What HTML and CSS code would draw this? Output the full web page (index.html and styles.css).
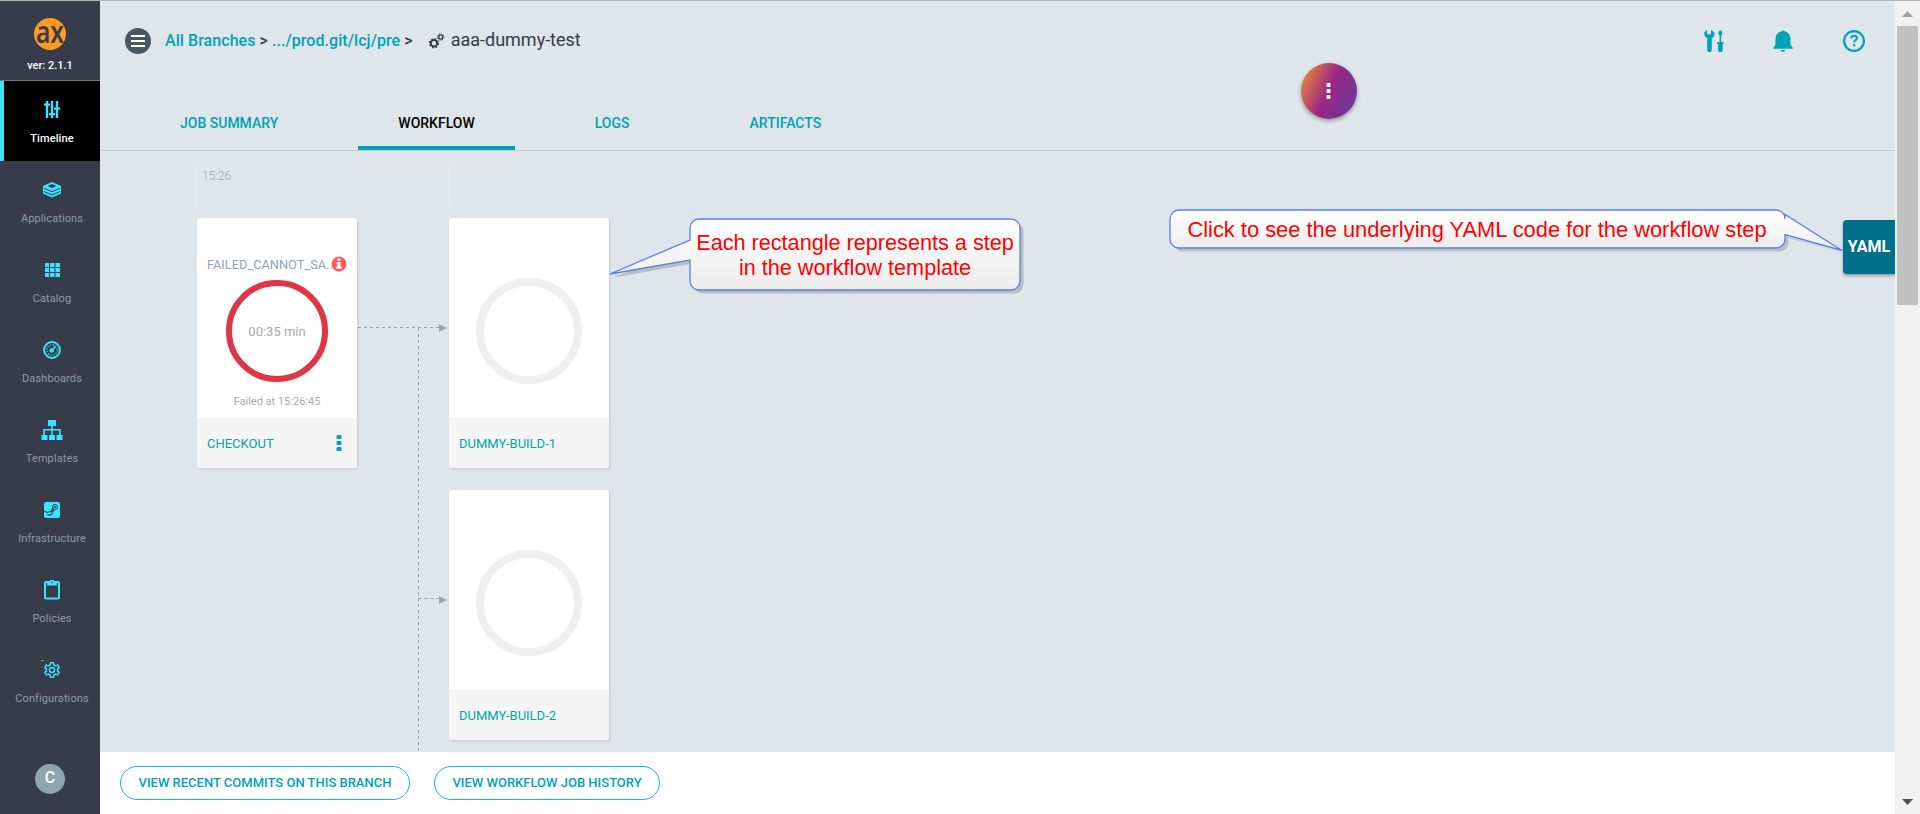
FILE: index.html
```html
<!DOCTYPE html>
<html lang="en">
<head>
<meta charset="utf-8">
<title>aaa-dummy-test</title>
<link rel="stylesheet" href="styles.css">
</head>
<body>
<div class="app">
  <nav class="sidebar">
    <div class="brand">
      <svg class="logo" width="32" height="32" viewBox="0 0 32 32"><circle cx="16" cy="16" r="16" fill="#ff9a1f"/><text class="logo-text" x="2" y="25" textLength="28" lengthAdjust="spacingAndGlyphs">ax</text></svg>
      <span class="version">ver: 2.1.1</span>
    </div>
    <a class="item active">
      <svg width="22" height="20" viewBox="0 0 22 20" fill="currentColor"><path d="M4.800 1h2.400v17H4.800zM9.800 1h2.400v17H9.800zM14.800 1h2.400v17h-2.400z"/><path d="M3 3.500h6v2.300H3zM8 13h6v2.300H8zM13 7.500h6v2.300h-6z"/></svg>
      <span>Timeline</span>
    </a>
    <a class="item">
      <svg width="22" height="20" viewBox="0 0 22 20" fill="currentColor"><path fill-rule="evenodd" d="M11 2l9 4v7.500l-9 4-9-4V6zM11 4L6.500 6 11 8l4.500-2zM3 7.700l8 3.500 8-3.500v1L11 12.200 3 8.700zM3 11l8 3.500L19 11v1l-8 3.500L3 12z"/></svg>
      <span>Applications</span>
    </a>
    <a class="item">
      <svg width="22" height="20" viewBox="0 0 22 20" fill="currentColor"><path d="M4 3h4v4H4zM9 3h4.500v4H9zM14.500 3H19v4h-4.500zM4 8h4v4H4zM9 8h4.500v4H9zM14.500 8H19v4h-4.500zM4 13h4v4H4zM9 13h4.500v4H9zM14.500 13H19v4h-4.500z"/></svg>
      <span>Catalog</span>
    </a>
    <a class="item">
      <svg width="22" height="20" viewBox="0 0 22 20" fill="none" stroke="currentColor"><circle cx="11" cy="10" r="7.900" stroke-width="2"/><circle cx="11" cy="10" r="5.200" stroke-width="1.200" stroke-dasharray="1.300 1.420"/><path d="M11 10.500L14.500 6" stroke-width="1.800"/><circle cx="10.700" cy="10.500" r="2.200" fill="currentColor" stroke="none"/></svg>
      <span>Dashboards</span>
    </a>
    <a class="item">
      <svg width="22" height="20" viewBox="0 0 22 20" fill="currentColor"><path d="M7 0h8v6H7zM10.200 6h1.600v9h-1.600z"/><path d="M2.300 16v-7h17.400v7h-1.600v-5.400H3.900V16z"/><path d="M.500 15h6v5h-6zM8 15h6v5H8zM15.500 15h6v5h-6z"/></svg>
      <span>Templates</span>
    </a>
    <a class="item">
      <svg width="22" height="20" viewBox="0 0 22 20"><rect x="3" y="2" width="16" height="16" rx="2" fill="currentColor"/><g fill="none" stroke="#373c4a"><circle cx="14" cy="7" r="2.500"/><path d="M3 11.200l4 1.300M6.500 14c1.500 2.200 5 1 4.800-2.200L13.500 9.500M7 12l3-.5 2-3.500" stroke-width="1.200"/></g><circle cx="14" cy="7" r="1" fill="#373c4a"/></svg>
      <span>Infrastructure</span>
    </a>
    <a class="item">
      <svg width="22" height="20" viewBox="0 0 22 20"><rect x="4" y="2" width="14" height="16.500" rx="1" fill="none" stroke="currentColor" stroke-width="2"/><path fill="currentColor" d="M6 3l3-2a2 2 0 0 1 4 0l3 2v2.500H6z"/><circle cx="11" cy="2.500" r=".7" fill="#373c4a"/></svg>
      <span>Policies</span>
    </a>
    <a class="item">
      <svg width="22" height="20" viewBox="0 0 22 20" fill="none" stroke="currentColor" stroke-width="1.500"><path d="M.500.500h2" stroke-width="1"/><path stroke-linejoin="round" d="M9.500 2.800h3l.4 2.200 1.600.9 2.200-.8 1.500 2.500-1.700 1.500v1.800l1.700 1.500-1.500 2.500-2.200-.8-1.600.9-.4 2.200h-3L9.100 15l-1.600-.9-2.200.8-1.500-2.500 1.700-1.500V9.100L3.800 7.600l1.500-2.500 2.200.8L9.100 5z"/><circle cx="11" cy="10" r="2.500"/></svg>
      <span>Configurations</span>
    </a>
    <div class="avatar">C</div>
  </nav>

  <main class="main">
    <header class="topbar">
      <svg class="menu" width="26" height="26" viewBox="0 0 26 26"><circle cx="13" cy="13" r="13" fill="#485863"/><path d="M6 8h14M6 13h14M6 18h14" stroke="#fff" stroke-width="2"/></svg>
      <div class="crumbs"><a>All Branches</a> &gt; <a>.../prod.git/lcj/pre</a> &gt;</div>
      <svg class="gears" width="17" height="16" viewBox="0 0 17 16" fill="none" stroke="#373c4a"><circle cx="6" cy="10.200" r="3.200" stroke-width="2"/><circle cx="6" cy="10.200" r="4.600" stroke-width="1.200" stroke-dasharray="1.800 1.813"/><circle cx="12.700" cy="4" r="2.100" stroke-width="1.400"/><circle cx="12.700" cy="4" r="3.200" stroke-width="1" stroke-dasharray="1.250 1.263"/></svg>
      <h1 class="job">aaa-dummy-test</h1>
      <div class="tools">
        <svg width="20" height="22" viewBox="0 0 20 22" fill="#00a2b3"><path d="M.600 2L3 0v3.500l2 1.300 2-1.300V0l3 2c1.500 3-.3 5.500-2.200 6.300v11.500a2.300 2.300 0 0 1-4.600 0V8.300C1.300 7.500-.600 5 .600 2zM15.300.500h2.200l1 3-1.300 2.500v6h2.300v2h-.8v6a2.200 2.200 0 0 1-4.600 0v-6h-.8v-2h2.300V6l-1.300-2.500z"/></svg>
        <svg width="20" height="22" viewBox="0 0 20 22" fill="#00a2b3"><path d="M8.700 1.200a1.500 1.500 0 0 1 2.600 0C15.800 2.500 17.500 5.500 17.500 9v5.500l2.300 3.500v.8H.200V18l2.300-3.500V9c0-3.500 1.700-6.500 6.200-7.800zM7.500 20h5c-.5 2.400-4.500 2.400-5 0z"/></svg>
        <svg width="24" height="22" viewBox="0 0 24 22" fill="none" stroke="#00a2b3"><circle cx="12" cy="11" r="9.900" stroke-width="2.200"/><path d="M9.200 8.500c.1-3.600 5.800-3.500 5.800-.4 0 2-2.900 2-2.900 4.300" stroke-width="2"/><path d="M12.100 14v2.200" stroke-width="2.200"/></svg>
      </div>
      <button class="fab"><svg width="6" height="16" viewBox="0 0 6 16" fill="#fff"><rect x=".500" width="4" height="4" rx="1"/><rect x=".500" y="6" width="4" height="4" rx="1"/><rect x=".500" y="12" width="4" height="4" rx="1"/></svg></button>
    </header>
    <div class="tabs">
      <a class="tab">JOB SUMMARY</a><a class="tab current">WORKFLOW</a><a class="tab">LOGS</a><a class="tab">ARTIFACTS</a>
    </div>

    <section class="canvas">
      <div class="column">
        <div class="stamp">15:26</div>
        <article class="card">
          <div class="card-body">
            <div class="status"><span>FAILED_CANNOT_SA..</span><svg width="16" height="16" viewBox="0 0 16 16"><circle cx="8" cy="8" r="7.500" fill="#ff5b5b"/><path d="M6.500 2.500h3v2.300h-3zM5.500 6h4v4.700h1.200v2H5.300v-2h1.200V8h-1z" fill="#fff"/></svg></div>
            <div class="ring failed">00:35 min</div>
            <div class="when">Failed at 15:26:45</div>
          </div>
          <footer class="card-foot"><span>CHECKOUT</span><svg width="6" height="16" viewBox="0 0 6 16" fill="#00a2b3"><rect x=".500" width="5" height="4" rx="1"/><rect x=".500" y="6" width="5" height="4" rx="1"/><rect x=".500" y="12" width="5" height="4" rx="1"/></svg></footer>
        </article>
      </div>
      <svg class="links" width="91" height="602" viewBox="0 0 91 602">
        <g fill="none" stroke="#8fa4b1" stroke-dasharray="3 3"><path d="M1 176.500h81M61.500 177v425M61.500 447.500h20"/></g>
        <path d="M82 173l8 4-8 4zM82 445l8 4-8 4z" fill="#a0a3a6"/>
      </svg>
      <div class="column">
        <div class="stamp"></div>
        <article class="card">
          <div class="card-body"><div class="ring"></div></div>
          <footer class="card-foot"><span>DUMMY-BUILD-1</span></footer>
        </article>
        <article class="card">
          <div class="card-body"><div class="ring"></div></div>
          <footer class="card-foot"><span>DUMMY-BUILD-2</span></footer>
        </article>
      </div>
      <aside class="yaml">YAML</aside>
    </section>

    <footer class="actions"><button>VIEW RECENT COMMITS ON THIS BRANCH</button><button>VIEW WORKFLOW JOB HISTORY</button></footer>
  </main>

  <div class="scrollbar">
    <svg width="25" height="25" viewBox="0 0 25 25"><path d="M7 16h11l-5.500-6z" fill="#a3a3a3"/></svg>
    <div class="thumb"></div>
    <svg class="down" width="25" height="25" viewBox="0 0 25 25"><path d="M7 10h11l-5.500 6z" fill="#505050"/></svg>
  </div>
</div>

<div class="callout steps">
  <svg width="420" height="84" viewBox="0 0 420 84">
    <defs><linearGradient id="paper" x1="0" y1="0" x2="0" y2="1"><stop offset="0" stop-color="#fff"/><stop offset="1" stop-color="#ececec"/></linearGradient></defs>
    <path transform="translate(3.500 3.500)" fill="#b9bec2" d="M90 2h312a9 9 0 0 1 9 9v53a9 9 0 0 1-9 9H90a9 9 0 0 1-9-9V43L1 57l80-34V11a9 9 0 0 1 9-9z"/>
    <path fill="url(#paper)" stroke="#5b7fe5" stroke-width="1.300" d="M90 2h312a9 9 0 0 1 9 9v53a9 9 0 0 1-9 9H90a9 9 0 0 1-9-9V43L1 57l80-34V11a9 9 0 0 1 9-9z"/>
  </svg>
  <p>Each rectangle represents a step<br>in the workflow template</p>
</div>
<div class="callout code">
  <svg width="680" height="50" viewBox="0 0 680 50">
    <path transform="translate(3.500 3)" fill="#b9bec2" d="M10 2h597a9 9 0 0 1 9 9v16l57 15-57-16v6a9 9 0 0 1-9 8.500H10a9 9 0 0 1-9-9V11a9 9 0 0 1 9-9z"/>
    <path fill="url(#paper)" stroke="#5b7fe5" stroke-width="1.300" d="M10 2h597a9 9 0 0 1 9 9V6.500l57 36-57-16v5a9 9 0 0 1-9 8.500H10a9 9 0 0 1-9-9V11a9 9 0 0 1 9-9z"/>
  </svg>
  <p>Click to see the underlying YAML code for the workflow step</p>
</div>
</body>
</html>
```

FILE: styles.css
```css
* { box-sizing: border-box; }
body { margin: 0; font-family: Roboto, "Liberation Sans", sans-serif; background: #dee5eb; overflow: hidden; }
svg { display: block; flex: none; }
.app { display: flex; width: 1920px; height: 814px; border-top: 1px solid #b5b2b8; }

.sidebar { display: flex; flex-direction: column; width: 100px; background: #373c4a; }
.brand { display: flex; flex-direction: column; align-items: center; height: 80px; padding-top: 17px; border-bottom: 1px solid #77797f; color: #fff; }
.logo { overflow: visible; }
.logo-text { font: 600 31px "Noto Sans", sans-serif; fill: #373c4a; }
.version { margin-top: 9px; font-size: 11px; line-height: 14px; font-weight: 500; }
.item { display: flex; flex-direction: column; align-items: center; height: 80px; padding: 19px 0 0 4px; color: #3ae3ff; }
.item span { margin-top: 12px; font-size: 11px; line-height: 14px; letter-spacing: .1px; color: #8b9ba8; }
.active { padding-left: 0; border-left: 4px solid #3ae3ff; background: #000; }
.active span { color: #fff; font-weight: 500; }
.avatar { display: flex; flex: none; justify-content: center; width: 30px; height: 30px; margin: 43px 0 0 35px; border-radius: 50%; background: #8fa4b1; color: #fff; font-size: 16px; line-height: 28px; font-weight: 500; }

.main { display: flex; flex-direction: column; width: 1795px; }
.topbar { position: relative; display: flex; align-items: center; height: 80px; padding: 0 29px 0 25px; }
.crumbs { margin: -2px 0 0 14px; font-size: 16px; font-weight: 500; letter-spacing: .06px; color: #373c4a; white-space: nowrap; }
.crumbs a { color: #00a2b3; }
.gears { margin-left: 15px; }
.job { margin: -2px 0 0 6px; font-size: 18px; line-height: 22px; font-weight: 400; color: #373c4a; }
.tools { display: flex; gap: 49px; margin-left: auto; }
.fab { position: absolute; left: 1201px; top: 62px; display: flex; align-items: center; justify-content: center; width: 56px; height: 56px; padding: 0; border: 0; border-radius: 50%; background: linear-gradient(115deg, #f0893a 5%, #992586 50%, #653d9a 95%); box-shadow: 0 2px 4px rgba(0,0,0,.35); }
.tabs { display: flex; gap: 40px; height: 70px; padding-left: 40px; border-bottom: 1px solid #c6cbd0; }
.tab { height: 69px; padding: 33px 40px 0; font-size: 14px; line-height: 18px; font-weight: 500; color: #00a2b3; }
.current { border-bottom: 4px solid #00a2b3; color: #000; }

.canvas { display: flex; align-items: flex-start; height: 601px; padding: 16px 0 0 96px; overflow: hidden; }
.column { width: 161px; }
.stamp { height: 40px; margin-bottom: 11px; padding: 1px 0 0 5px; border-left: 1px solid #e8e9ea; font-size: 12px; line-height: 16px; font-weight: 300; color: #aaa; }
.card { width: 160px; height: 250px; margin: 0 0 22px 1px; border-radius: 3px; background: #fff; box-shadow: 1px 1px 2px rgba(143,164,177,.4); }
.card-body { display: flex; flex-direction: column; align-items: center; height: 200px; padding-top: 38px; }
.ring { width: 106px; height: 106px; margin-top: 22px; border: 8px solid #efefef; border-radius: 50%; }
.status { display: flex; align-items: center; width: 140px; height: 16px; font-size: 12.800px; color: #8fa4b1; white-space: nowrap; }
.status span { width: 124px; }
.failed { width: 102px; height: 102px; margin-top: 8px; border: 6px solid #de3646; color: #aaa; font-size: 13px; line-height: 91px; text-align: center; box-shadow: 0 0 0 1px #eee; }
.when { margin-top: 13px; font-size: 11px; line-height: 14px; color: #aaa; }
.card-foot { display: flex; align-items: center; justify-content: space-between; height: 50px; padding: 0 15px 0 10px; border-radius: 0 0 3px 3px; background: #f5f5f5; font-size: 13px; color: #00a2b3; }
.links { margin: -16px 0 0; }
.yaml { width: 52px; height: 54px; margin: 53px 0 0 auto; border-radius: 4px 0 0 4px; background: #006f8a; box-shadow: 0 2px 3px rgba(0,0,0,.3); color: #fff; font-size: 16px; line-height: 54px; font-weight: 700; text-align: center; }

.actions { display: flex; gap: 24px; height: 62px; padding: 14px 20px; background: #fff; }
.actions button { height: 34px; padding: 0 17.500px; border: 1px solid #1bb5cc; border-radius: 17px; background: #fff; color: #00a2b3; font: 500 13px/32px Roboto, sans-serif; white-space: nowrap; }

.scrollbar { display: flex; flex-direction: column; width: 25px; background: #f1f1f1; }
.thumb { width: 21px; height: 279px; margin-left: 2px; background: #c1c1c1; }
.down { margin-top: auto; }

.callout { position: absolute; color: #f00; font: 21.650px/25px "Liberation Sans", sans-serif; text-align: center; white-space: nowrap; }
.callout p { position: absolute; margin: 0; }
.steps { left: 609px; top: 217px; }
.steps p { left: 81px; top: 13px; width: 330px; }
.code { left: 1169px; top: 208px; font-size: 21.870px; }
.code p { left: 1px; top: 9px; width: 614px; }
```
